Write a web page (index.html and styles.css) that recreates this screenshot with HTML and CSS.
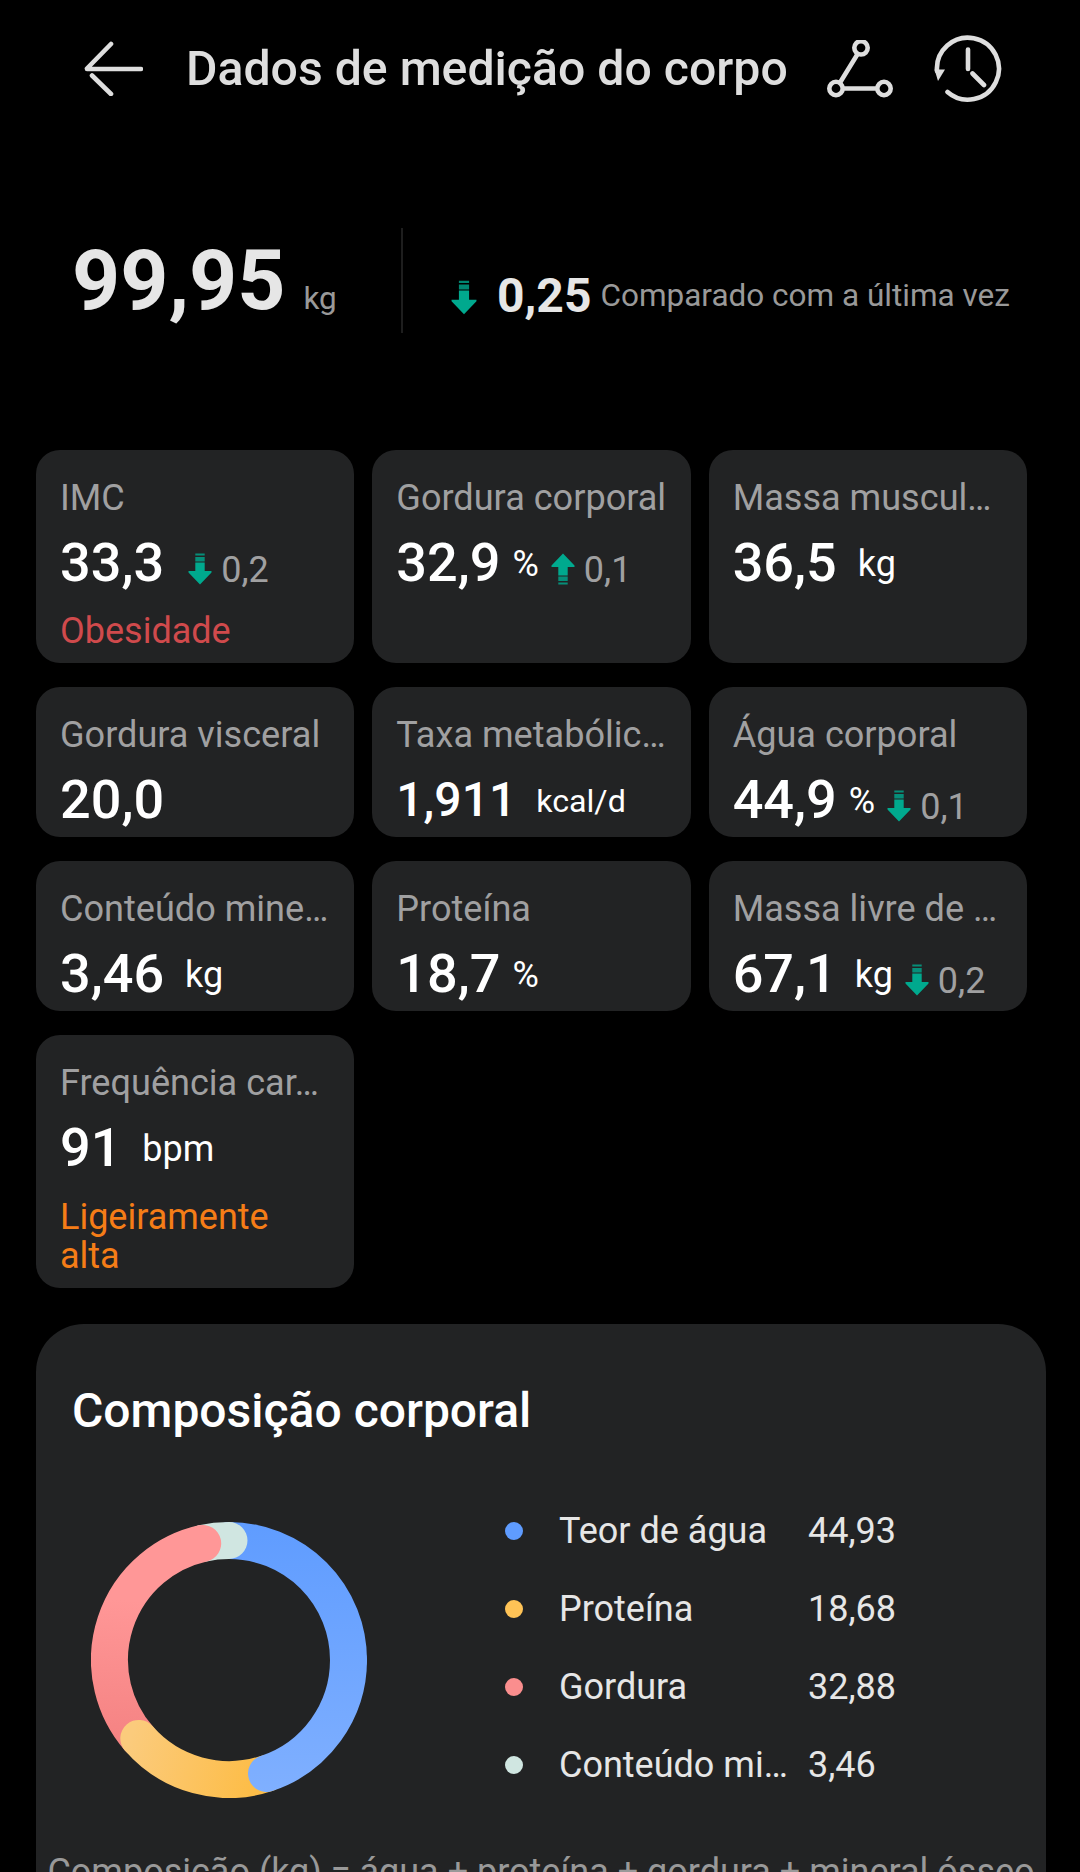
FILE: index.html
```html
<!DOCTYPE html>
<html lang="pt-BR">
<head>
    <meta charset="UTF-8">
    <title>Dados de medição do corpo</title>
    <link rel="stylesheet" href="styles.css">
</head>
<body>
    <svg class="defs">
        <symbol id="arrow" viewBox="0 0 24 32">
            <path d="M7.300 0.500h9.400v2H7.300zM7.300 4h9.400v4.500H7.300z" opacity="0.8"/>
            <path d="M7.300 9.500h9.400v8.500H23.500v1.500L12 31.500 0.500 19.500V18H7.300z"/>
        </symbol>
    </svg>

    <header class="topbar">
        <svg class="back" width="60" height="56" viewBox="0 0 60 56">
            <path d="M28 4L4 28.500M4 29h54M9 35.500L28 54"/>
        </svg>
        <h1>Dados de medição do corpo</h1>
        <svg class="trend" width="68" height="60" viewBox="0 0 68 60">
            <path d="M31 15L15 41M18 48.500h32"/>
            <circle cx="35" cy="7.800" r="6.700"/>
            <circle cx="10" cy="48.500" r="6.700"/>
            <circle cx="58" cy="48.500" r="6.700"/>
        </svg>
        <svg class="history" width="68" height="68" viewBox="0 0 68 68">
            <path d="M3 36A31 31 0 1 1 13.500 57M34 14.500V34M38.500 38.500L50 50"/>
            <path class="head" d="M0.500 34.500h10.500l-7 11.500z"/>
        </svg>
    </header>

    <section class="weight">
        <div class="weight-now">
            <span class="weight-value">99,95</span>
            <span class="weight-unit">kg</span>
        </div>
        <div class="weight-diff">
            <svg class="arrow big"><use href="#arrow"/></svg>
            <span class="diff-value">0,25</span>
            <span class="diff-text">Comparado com a última vez</span>
        </div>
    </section>

    <section class="cards">
        <div class="card">
            <div class="label">IMC</div>
            <div class="row"><span class="value">33,3</span><span class="unit"></span><svg class="arrow"><use href="#arrow"/></svg><span class="delta">0,2</span></div>
            <div class="status red">Obesidade</div>
        </div>
        <div class="card">
            <div class="label">Gordura corporal</div>
            <div class="row"><span class="value">32,9</span><span class="unit">%</span><svg class="arrow up"><use href="#arrow"/></svg><span class="delta">0,1</span></div>
        </div>
        <div class="card">
            <div class="label">Massa muscul…</div>
            <div class="row"><span class="value">36,5</span><span class="unit">&nbsp;kg</span></div>
        </div>
        <div class="card">
            <div class="label">Gordura visceral</div>
            <div class="row"><span class="value">20,0</span></div>
        </div>
        <div class="card">
            <div class="label">Taxa metabólic…</div>
            <div class="row small"><span class="value">1,911</span><span class="unit">&nbsp;kcal/d</span></div>
        </div>
        <div class="card">
            <div class="label">Água corporal</div>
            <div class="row"><span class="value">44,9</span><span class="unit">%</span><svg class="arrow"><use href="#arrow"/></svg><span class="delta">0,1</span></div>
        </div>
        <div class="card">
            <div class="label">Conteúdo mine…</div>
            <div class="row"><span class="value">3,46</span><span class="unit">&nbsp;kg</span></div>
        </div>
        <div class="card">
            <div class="label">Proteína</div>
            <div class="row"><span class="value">18,7</span><span class="unit">%</span></div>
        </div>
        <div class="card">
            <div class="label">Massa livre de …</div>
            <div class="row tight"><span class="value">67,1</span><span class="unit">&nbsp;kg</span><svg class="arrow"><use href="#arrow"/></svg><span class="delta">0,2</span></div>
        </div>
        <div class="card">
            <div class="label">Frequência car…</div>
            <div class="row"><span class="value">91</span><span class="unit">&nbsp;bpm</span></div>
            <div class="status orange">Ligeiramente alta</div>
        </div>
    </section>

    <section class="panel">
        <h2>Composição corporal</h2>
        <div class="chart">
            <svg class="donut" width="276" height="276" viewBox="0 0 276 276">
                <defs>
                    <linearGradient id="water" gradientUnits="userSpaceOnUse" x1="138" y1="0" x2="138" y2="276">
                        <stop offset="0" stop-color="#5f9cff"/>
                        <stop offset="1" stop-color="#80b0ff"/>
                    </linearGradient>
                    <linearGradient id="protein" gradientUnits="userSpaceOnUse" x1="165" y1="250" x2="40" y2="215">
                        <stop offset="0" stop-color="#fdbd48"/>
                        <stop offset="1" stop-color="#fbcb7c"/>
                    </linearGradient>
                    <linearGradient id="fat" gradientUnits="userSpaceOnUse" x1="60" y1="80" x2="50" y2="220">
                        <stop offset="0" stop-color="#ff9797"/>
                        <stop offset="1" stop-color="#f58383"/>
                    </linearGradient>
                </defs>
                <path stroke="url(#water)" d="M138 18.500A119.500 119.500 0 0 1 257.500 138"/>
                <path stroke="#d0e6e1" d="M111.700 21.400A119.500 119.500 0 0 1 138 18.500"/>
                <path stroke="url(#fat)" d="M47.800 216.400A119.500 119.500 0 0 1 111.700 21.400"/>
                <path stroke="url(#protein)" d="M175.500 251.500A119.500 119.500 0 0 1 47.800 216.400"/>
                <path stroke="url(#water)" d="M257.500 138A119.500 119.500 0 0 1 175.500 251.500"/>
            </svg>
            <ul class="legend">
                <li><i class="dot water"></i><span class="name">Teor de água</span><span>44,93</span></li>
                <li><i class="dot protein"></i><span class="name">Proteína</span><span>18,68</span></li>
                <li><i class="dot fat"></i><span class="name">Gordura</span><span>32,88</span></li>
                <li><i class="dot mineral"></i><span class="name">Conteúdo mi…</span><span>3,46</span></li>
            </ul>
        </div>
        <p class="note">Composição (kg) = água + proteína + gordura + mineral ósseo</p>
    </section>
</body>
</html>
```
FILE: styles.css
```css
* {
    box-sizing: border-box;
}
body {
    margin: 0;
    width: 1080px;
    height: 1872px;
    overflow: hidden;
    background-color: #000;
    color: #fff;
    font-family: Roboto, sans-serif;
}
svg {
    display: block;
    flex: none;
}
.defs {
    width: 0;
    height: 0;
}

/* header */
.topbar {
    display: flex;
    height: 138px;
    padding: 35px 0 0 83px;
}
.topbar svg {
    fill: none;
    stroke: #dedede;
    stroke-width: 4.6;
    stroke-linecap: round;
}
.topbar .back {
    margin-top: 5px;
}
.topbar h1 {
    width: 608px;
    margin: 6px 0 0 43px;
    font-size: 48.2px;
    font-weight: 500;
    line-height: 56px;
    color: #dedede;
    white-space: nowrap;
}
.topbar .trend {
    margin: 5px 0 0 32px;
}
.topbar .history {
    margin-left: 40px;
}
.topbar .history .head {
    fill: #dedede;
    stroke: none;
}

/* weight */
.weight {
    display: flex;
    height: 312px;
    padding-top: 90px;
}
.weight-now {
    display: flex;
    width: 403px;
    height: 105px;
    padding-left: 72px;
    border-right: 2px solid #1e1e1e;
    align-items: baseline;
}
.weight-value {
    font-size: 84px;
    font-weight: 700;
    line-height: 100px;
    margin-top: 3px;
    color: #e6e6e6;
}
.weight-unit {
    margin-left: 18px;
    font-size: 31.5px;
    color: #999;
}
.weight-diff {
    display: flex;
    padding-left: 48px;
}
.diff-value {
    margin: 40px 0 0 20px;
    font-size: 48px;
    font-weight: 700;
    line-height: 56px;
    color: #e6e6e6;
}
.diff-text {
    margin: 50px 0 0 9px;
    font-size: 31.5px;
    line-height: 36px;
    color: #999;
    white-space: nowrap;
}
.arrow {
    width: 24px;
    height: 32px;
    margin: 22px 0 0 12px;
    fill: #00a98e;
}
.arrow.big {
    width: 26px;
    height: 35px;
    margin: 52px 0 0;
}
.arrow.up {
    transform: rotate(180deg);
}

/* cards */
.cards {
    display: grid;
    grid-template-columns: repeat(3, 1fr);
    grid-template-rows: 213px 150px 150px 253px;
    gap: 24px 18px;
    width: 991px;
    margin-left: 36px;
}
.card {
    padding: 27px 20px 0 24px;
    background-color: #222324;
    border-radius: 24px;
}
.label {
    font-size: 36.1px;
    line-height: 42px;
    color: #a0a0a1;
    white-space: nowrap;
}
.row {
    display: flex;
    height: 63px;
    margin-top: 12px;
    white-space: nowrap;
}
.value {
    font-size: 54px;
    font-weight: 500;
    line-height: 63px;
}
.unit {
    margin: 12px 0 0 12px;
    font-size: 36px;
    line-height: 42px;
}
.small .value {
    font-size: 48px;
}
.small .unit {
    font-size: 32.2px;
}
.tight .unit {
    margin-left: 9px;
}
.delta {
    margin: 18px 0 0 9px;
    font-size: 36px;
    line-height: 42px;
    color: #a0a0a1;
}
.status {
    margin-top: 18px;
    font-size: 36px;
    line-height: 38.5px;
}
.red {
    color: #d04a4c;
}
.orange {
    margin-top: 19px;
    color: #f57d17;
}

/* composition */
.panel {
    width: 1010px;
    height: 620px;
    margin: 36px 0 0 36px;
    padding-top: 57px;
    background-color: #222324;
    border-radius: 48px 48px 0 0;
}
.panel h2 {
    margin: 0 0 0 36px;
    font-size: 48px;
    font-weight: 500;
    line-height: 60px;
}
.chart {
    display: flex;
    height: 354px;
    padding: 51px 0 0 54.5px;
}
.donut {
    margin-top: 30px;
    fill: none;
    stroke-width: 37;
    stroke-linecap: round;
}
.legend {
    margin: 0 0 0 138.5px;
    padding: 0;
    list-style: none;
    color: #e6e6e6;
}
.legend li {
    display: flex;
    align-items: center;
    height: 78px;
    font-size: 36px;
}
.legend .name {
    width: 249px;
}
.dot {
    width: 18px;
    height: 18px;
    margin-right: 36px;
    border-radius: 50%;
}
.dot.water { background-color: #5f9cff; }
.dot.protein { background-color: #ffc356; }
.dot.fat { background-color: #fa8e8e; }
.dot.mineral { background-color: #d0e6e1; }
.note {
    margin: 56px 0 0;
    font-size: 36px;
    line-height: 42px;
    text-align: center;
    color: #999;
    white-space: nowrap;
}
```
